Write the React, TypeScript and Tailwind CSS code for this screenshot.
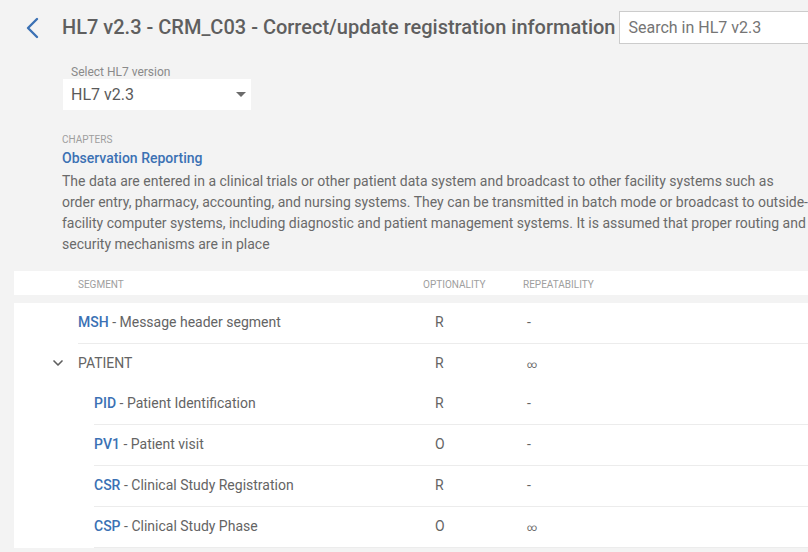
import { ChevronDown } from "lucide-react";

type Row = {
  code?: string;
  name: string;
  opt: string;
  rep: string;
  level: 0 | 1;
  group?: boolean;
  divider?: boolean;
};

const rows: Row[] = [
  { code: "MSH", name: "Message header segment", opt: "R", rep: "-", level: 0, divider: true },
  { name: "PATIENT", opt: "R", rep: "∞", level: 0, group: true },
  { code: "PID", name: "Patient Identification", opt: "R", rep: "-", level: 1, divider: true },
  { code: "PV1", name: "Patient visit", opt: "O", rep: "-", level: 1, divider: true },
  { code: "CSR", name: "Clinical Study Registration", opt: "R", rep: "-", level: 1, divider: true },
  { code: "CSP", name: "Clinical Study Phase", opt: "O", rep: "∞", level: 1, divider: true },
];

function SegmentRow({ row }: { row: Row }) {
  const nested = row.level === 1;
  return (
    <div
      className={
        "flex " + (row.group ? "h-[40px] " : "h-[41px] ") + (nested ? "pl-[80px]" : "pl-[64px]")
      }
    >
      <div
        className={
          "flex flex-1 items-center pb-[2px] " + (row.divider ? "border-b border-[#ececec]" : "")
        }
      >
        <div className={nested ? "flex w-[329px] items-center" : "flex w-[345px] items-center"}>
          {row.group && (
            <ChevronDown size={16} strokeWidth={2.5} className="-ml-[28px] mr-[12px] text-[#5f5f5f]" />
          )}
          {row.code ? (
            <span className="text-[14px] text-[#646464]">
              <span className="font-medium text-[#3b71b4]">{row.code}</span> - {row.name}
            </span>
          ) : (
            <span className="text-[14px] text-[#646464]">{row.name}</span>
          )}
        </div>
        <div className="w-[100px] pl-[12px] text-[14px] text-[#646464]">{row.opt}</div>
        <div className="pl-[4px] text-[14px] text-[#646464]">
          {row.rep === "∞" ? <span className="text-[10px]">∞</span> : row.rep}
        </div>
      </div>
    </div>
  );
}

export default function App() {
  return (
    <div
      className="relative h-[552px] w-[808px] overflow-hidden bg-[#f3f3f3]"
      style={{ fontFamily: "Roboto, 'Noto Sans', sans-serif" }}
    >
      <div className="w-[1000px]">
        {/* header */}
        <div className="flex items-center pl-[26px] pt-[11px]">
          <svg width="14" height="22" viewBox="0 0 14 22" className="mr-[22px]">
            <path d="M11 2 L2 11 L11 20" fill="none" stroke="#3b71b4" strokeWidth="2.4" strokeLinecap="round" strokeLinejoin="round" />
          </svg>
          <h1 className="text-[20px] font-medium leading-[33px] text-[#5f5f5f]">
            HL7 v2.3 - CRM_C03 - Correct/update registration information
          </h1>
          <div className="ml-[4px] flex h-[33px] w-[260px] items-center border border-[#cccccc] bg-white pl-[8px] text-[16px] text-[#757575]">
            Search in HL7 v2.3
          </div>
        </div>

        {/* version select */}
        <div className="ml-[63px] mt-[20px]">
          <div className="pl-[8px] pt-[1px] text-[12px] leading-[14px] text-[#8a8a8a]">Select HL7 version</div>
          <div className="flex h-[31px] w-[188px] items-center justify-between bg-white pl-[8px] pr-[5px]">
            <span className="text-[16px] text-[#5a5a5a]">HL7 v2.3</span>
            <svg width="10" height="5" viewBox="0 0 10 5">
              <path d="M0 0 L10 0 L5 5 Z" fill="#6b6b6b" />
            </svg>
          </div>
        </div>

        {/* chapter */}
        <div className="ml-[62px] mt-[23px] w-[770px]">
          <div className="pt-[1px] text-[10px] uppercase leading-[12px] text-[#9e9e9e]">Chapters</div>
          <div className="mt-[2px] text-[14px] font-medium leading-[20px] text-[#3b71b4]">
            Observation Reporting
          </div>
          <p className="mt-[3px] text-[14px] leading-[21px] text-[#6a6a6a]">
            The data are entered in a clinical trials or other patient data system and broadcast to other facility
            systems such as
            <br />
            order entry, pharmacy, accounting, and nursing systems. They can be transmitted in batch mode or broadcast
            to outside-
            <br />
            facility computer systems, including diagnostic and patient management systems. It is assumed that proper
            routing and
            <br />
            security mechanisms are in place
          </p>
        </div>

        {/* table */}
        <div className="ml-[14px] mt-[16px]">
          <div className="flex h-[24px] items-center bg-white pl-[64px] pt-[2px] text-[10px] uppercase text-[#9e9e9e]">
            <div className="w-[345px]">Segment</div>
            <div className="w-[100px]">Optionality</div>
            <div>Repeatability</div>
          </div>
          <div className="mt-[8px] bg-white">
            {rows.map((r, i) => (
              <SegmentRow key={i} row={r} />
            ))}
          </div>
        </div>
      </div>
    </div>
  );
}
